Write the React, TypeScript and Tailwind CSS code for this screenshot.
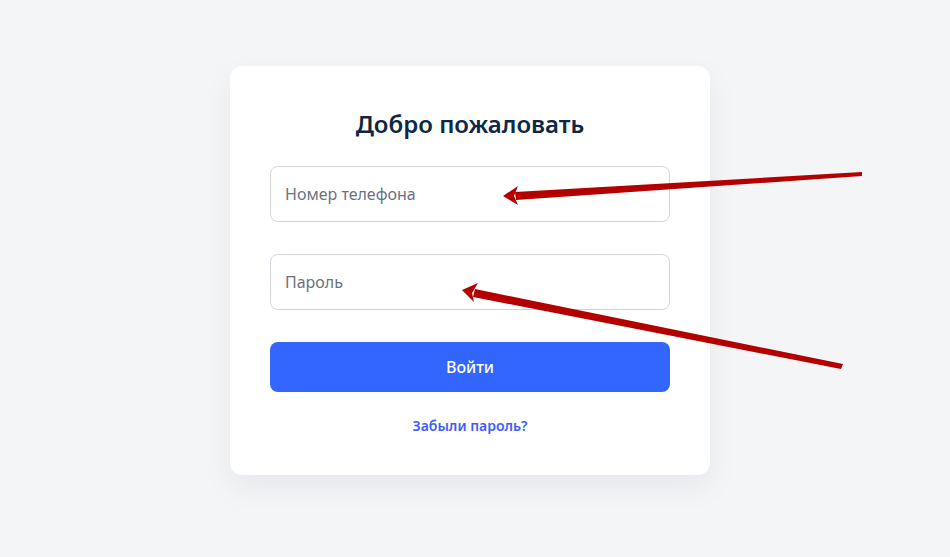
import React from "react";

function Arrows() {
  return (
    <svg
      className="pointer-events-none absolute left-0 top-0"
      width="950"
      height="557"
      viewBox="0 0 950 557"
    >
      {/* phone arrow */}
      <polygon points="862,172 862,176 516,200 515,192" fill="#b30000" />
      <polygon points="503,196 518,186 514,196 518,205" fill="#b30000" />
      {/* password arrow */}
      <polygon points="843,364 841,369 473,297 475,289" fill="#b30000" />
      <polygon points="462,290 478,283 472,293 474,302" fill="#b30000" />
    </svg>
  );
}

export default function App() {
  return (
    <div
      className="relative min-h-screen bg-[#f4f5f7] pl-[230px] pt-[66px]"
      style={{ fontFamily: '"Noto Sans", "Open Sans", sans-serif' }}
    >
      <div className="w-[480px] rounded-xl bg-white px-10 pb-[38px] pt-[42px] shadow-[0_12px_32px_rgba(15,23,42,0.06)]">
        <h1 className="text-center text-2xl font-semibold leading-8 text-[#0f2746]">
          Добро пожаловать
        </h1>
        <div className="mt-[26px] flex flex-col gap-8">
          <input
            className="h-14 w-full rounded-lg border border-[#d1d5db] px-3.5 text-base text-[#111827] placeholder:text-[#6b7280] outline-none"
            placeholder="Номер телефона"
          />
          <input
            type="password"
            className="h-14 w-full rounded-lg border border-[#d1d5db] px-3.5 text-base text-[#111827] placeholder:text-[#6b7280] outline-none"
            placeholder="Пароль"
          />
          <button className="h-[50px] w-full rounded-lg bg-[#3366ff] text-base font-medium text-white">
            Войти
          </button>
        </div>
        <div className="mt-[21px] text-center">
          <a className="text-sm font-semibold leading-5 text-[#3d5efc]" href="#">
            Забыли пароль?
          </a>
        </div>
      </div>
      <Arrows />
    </div>
  );
}
